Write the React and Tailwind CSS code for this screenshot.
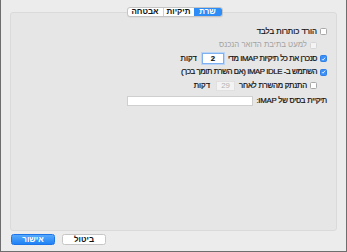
import React from 'react';

const font = { fontFamily: '"Liberation Sans", "DejaVu Sans", sans-serif' };

const Check = ({ checked, disabled }) => (
  <span
    className={
      'inline-flex h-[7px] w-[7px] shrink-0 items-center justify-center rounded-[1.5px] border ' +
      (checked
        ? 'border-[#2f7fe6] bg-[#3b8ff6]'
        : disabled
        ? 'border-[#d6d6d6] bg-[#f4f4f4]'
        : 'border-[#a9a9a9] bg-white')
    }
  >
    {checked && (
      <svg viewBox="0 0 8 8" className="h-[6px] w-[6px]">
        <path d="M1.5 4.2 L3.2 5.9 L6.6 1.8" fill="none" stroke="white" strokeWidth="1.3" />
      </svg>
    )}
  </span>
);

const Row = ({ children, indent }) => (
  <div className={'flex h-[13.5px] items-center gap-[3px] ' + (indent ? 'pr-[10px]' : '')}>{children}</div>
);

export default function App() {
  return (
    <div
      dir="rtl"
      style={font}
      className="flex h-[252px] w-[347px] flex-col border-x border-b border-[#6e6e6e] bg-[#ececec] text-[7.8px] text-[#111]"
    >
      <div className="relative z-10 mt-[7px] flex justify-center pl-[2px]">
        <div className="flex h-[10px] overflow-hidden rounded-[3px] border border-[#c4c4c4] bg-white text-[8px] font-bold leading-none shadow-[0_0.5px_0.5px_rgba(0,0,0,0.08)]">
          <div className="flex w-[28px] items-center justify-center bg-[#2d8cf6] text-white">שרת</div>
          <div className="flex w-[31px] items-center justify-center border-l border-[#d0d0d0]">תיקיות</div>
          <div className="flex w-[35px] items-center justify-center">אבטחה</div>
        </div>
      </div>
      <div className="mx-[9px] -mt-[5px] flex h-[219px] flex-col rounded-[3px] border border-[#dadada] bg-[#e6e6e6] pr-[9px] pt-[12px] [-webkit-text-stroke:0.2px_#111]">
        <Row>
          <Check />
          <span>הורד כותרות בלבד</span>
        </Row>
        <Row indent>
          <Check disabled />
          <span className="text-[#a3a3a3] [-webkit-text-stroke:0]">למעט בתיבת הדואר הנכנס</span>
        </Row>
        <Row>
          <Check checked />
          <span className="tracking-[-0.4px]">סנכרן את כל תיקיות IMAP מדי</span>
          <span className="mr-[1px] flex h-[11px] w-[22px] items-center justify-center border border-[#7fb0ef] bg-white font-bold shadow-[0_0_0_1px_#b9d4f6]">
            2
          </span>
          <span className="mr-[2px]">דקות</span>
        </Row>
        <Row>
          <Check checked />
          <span className="tracking-[-0.4px]">השתמש ב- IMAP IDLE (אם השרת תומך בכך)</span>
        </Row>
        <Row indent>
          <Check />
          <span className="tracking-[-0.2px]">התנתק מהשרת לאחר</span>
          <span className="mr-[1px] flex h-[10px] w-[19px] items-center justify-center border border-[#e0e0e0] bg-[#f3f3f3] text-[#b2b2b2] [-webkit-text-stroke:0]">
            29
          </span>
          <span className="mr-[3px]">דקות</span>
        </Row>
        <div className="mt-[1.5px] flex h-[13.5px] items-center gap-[3px]">
          <span className="tracking-[-0.25px]">תיקיית בסיס של IMAP:</span>
          <span className="h-[10px] w-[126px] border border-[#cfcfcf] bg-white" />
        </div>
      </div>
      <div className="mt-[3px] flex flex-row-reverse justify-start gap-[7px] pl-[10px] text-[8px] font-bold leading-none">
        <button className="flex h-[11px] w-[44px] items-center justify-center rounded-[2.5px] border border-[#1c74e6] bg-gradient-to-b from-[#55a8fb] to-[#1f82f5] text-white">
          אישור
        </button>
        <button className="flex h-[11px] w-[44px] items-center justify-center rounded-[2.5px] border border-[#c6c6c6] bg-white">
          ביטול
        </button>
      </div>
    </div>
  );
}
